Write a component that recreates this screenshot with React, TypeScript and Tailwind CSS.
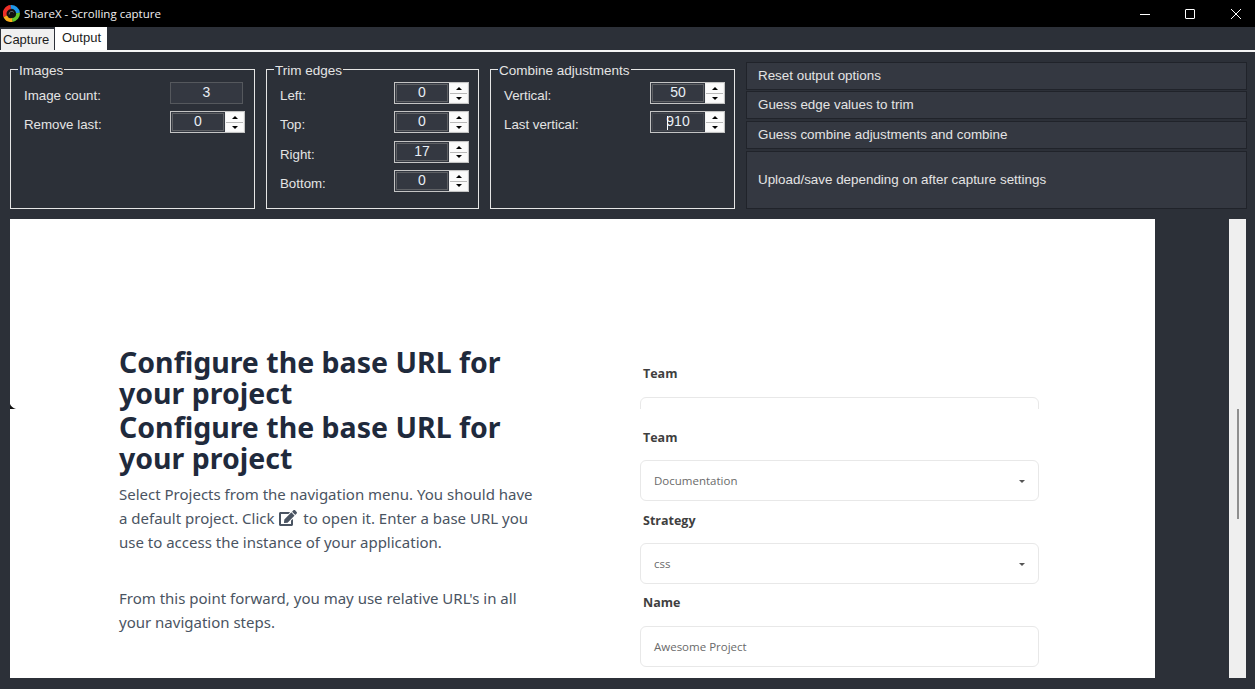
import React from "react";
import { FaEdit } from "react-icons/fa";

const ui = "font-['Liberation_Sans',Arial,sans-serif]";

function Logo() {
  return (
    <svg width="17" height="17" viewBox="0 0 17 17" fill="none" className="shrink-0">
      <circle cx="8.5" cy="8.5" r="8.5" fill="#111" />
      <path d="M2.2 11.2A6.6 6.6 0 0 1 7.8 2" stroke="#ee2f27" strokeWidth="3.8" />
      <path d="M7.8 2A6.6 6.6 0 0 1 15 8" stroke="#1d96e8" strokeWidth="3.8" />
      <path d="M15 8A6.6 6.6 0 0 1 9.2 15" stroke="#62c62a" strokeWidth="3.8" />
      <path d="M9.2 15A6.6 6.6 0 0 1 2.2 11.2" stroke="#f9ae1a" strokeWidth="3.8" />
      <path d="M6.2 9.5A2.6 2.6 0 0 1 10.8 7.4" stroke="#ffffff" strokeOpacity=".35" strokeWidth="1" />
    </svg>
  );
}

function Spin({ value, caret }: { value: string; caret?: boolean }) {
  return (
    <div className="flex w-[75px] h-[22px] border border-[#c4c4c4] bg-[#343841] shrink-0">
      <div className="p-px w-[54px] h-full">
        <div className={`relative w-full h-full border ${caret ? "border-[#44474e]" : "border-[#5f6165]"} flex items-center justify-center text-[#e8eef5] text-[14px] leading-none pb-[2px]`}>
          {caret && <span className="absolute left-[14px] top-[2px] w-px h-[14px] bg-white" />}
          {value}
        </div>
      </div>
      <div className="flex-1 bg-[#f4f4f4] flex flex-col justify-between px-px py-px">
        <div className="h-[9px] bg-[#fbfbfb] flex items-center justify-center">
          <span className="w-0 h-0 border-x-[3.5px] border-x-transparent border-b-[3.5px] border-b-black" />
        </div>
        <div className="h-px bg-[#b8b8b8]" />
        <div className="h-[8px] bg-[#fbfbfb] flex items-center justify-center">
          <span className="w-0 h-0 border-x-[3.5px] border-x-transparent border-t-[3.5px] border-t-black" />
        </div>
      </div>
    </div>
  );
}

function Row({ label, children }: { label: string; children: React.ReactNode }) {
  return (
    <div className="flex items-center justify-between pl-[13px] pr-[9px] h-[22px]">
      <span className="text-[13.3px] leading-none text-[#e4e4e4] pt-[5px]">{label}</span>
      {children}
    </div>
  );
}

function Group({ title, width, children }: { title: string; width: string; children: React.ReactNode }) {
  return (
    <fieldset className={`${width} h-[147px] border border-[#e6e6e6] shrink-0`}>
      <legend className="ml-[7px] px-px text-[13.5px] leading-[15px] text-[#e4e4e4]">
        <span className="relative top-px">{title}</span>
      </legend>
      <div className="mt-[5px] flex flex-col gap-[7.33px]">{children}</div>
    </fieldset>
  );
}

function ActionButton({ label, h, extra = "pt-px" }: { label: string; h: string; extra?: string }) {
  return (
    <div className={`${h} ${extra} flex items-center pl-[11px] bg-[#343841] border border-[#20232a] text-[13.4px] text-[#e4e4e4]`}>
      {label}
    </div>
  );
}

function FieldLabel({ label }: { label: string }) {
  return (
    <div className="pl-[3px] text-[12.5px] leading-[20px] font-bold text-[#3f3f3f]">
      <span className="relative top-px">{label}</span>
    </div>
  );
}

function Field({ label, value, arrow, gap = "mt-[13px]" }: { label: string; value: string; arrow?: boolean; gap?: string }) {
  return (
    <div>
      <FieldLabel label={label} />
      <div className={`${gap} h-[41px] flex items-center justify-between pl-[13px] pr-[13px] pt-[1px] border border-[#e8e8e8] rounded-[6px] text-[11.5px] text-[#6a6a6a]`}>
        {value}
        {arrow && <span className="w-0 h-0 border-x-[3.5px] border-x-transparent border-t-[3.5px] border-t-[#555]" />}
      </div>
    </div>
  );
}

const Heading = () => (
  <h2 className="text-[28.5px] leading-[31px] font-bold text-[#1f2a3c]">Configure the base URL for your project</h2>
);

export default function App() {
  return (
    <div className={`${ui} relative w-[1255px] h-[689px] overflow-hidden flex flex-col bg-[#2c3038]`}>
      <header className="h-[27px] bg-black flex items-center shrink-0">
        <div className="pl-[3px] pr-[4px]"><Logo /></div>
        <span className="font-['Open_Sans',sans-serif] text-[11.5px] text-[#f0f0f0]">ShareX - Scrolling capture</span>
        <div className="ml-auto flex items-center pr-[14px] gap-[35px]">
          <svg width="10" height="10" viewBox="0 0 10 10" className="text-white"><path d="M0 5.5h10" stroke="currentColor" /></svg>
          <svg width="10" height="10" viewBox="0 0 10 10" className="text-white"><rect x=".5" y=".5" width="9" height="9" rx=".5" fill="none" stroke="currentColor" /></svg>
          <svg width="10" height="10" viewBox="0 0 10 10" className="text-white ml-[1px]"><path d="M0 0l10 10M10 0L0 10" stroke="currentColor" /></svg>
        </div>
      </header>

      <nav className="h-[23px] flex items-end gap-px pl-px shrink-0">
        <div className="h-[21px] w-[53px] bg-[#f0f0f0] text-[13px] leading-[22px] text-[#1c1c1c] pl-[2px]">Capture</div>
        <div className="h-[23px] w-[52px] bg-white text-[13px] leading-[22px] text-[#1c1c1c] pl-[7px]">Output</div>
      </nav>
      <div className="h-[2px] bg-[#f4f4f4] shrink-0" />

      <section className="mt-[10px] pl-[10px] pr-[8px] flex gap-[11px] shrink-0">
        <Group title="Images" width="w-[245px]">
          <Row label="Image count:">
            <div className="w-[73px] h-[22px] mr-[2px] bg-[#343841] border border-[#55585d] flex items-center justify-center text-[14px] text-[#e8eef5] pb-[2px]">3</div>
          </Row>
          <Row label="Remove last:"><Spin value="0" /></Row>
        </Group>
        <Group title="Trim edges" width="w-[213px]">
          <Row label="Left:"><Spin value="0" /></Row>
          <Row label="Top:"><Spin value="0" /></Row>
          <Row label="Right:"><Spin value="17" /></Row>
          <Row label="Bottom:"><Spin value="0" /></Row>
        </Group>
        <Group title="Combine adjustments" width="w-[245px]">
          <Row label="Vertical:"><Spin value="50" /></Row>
          <Row label="Last vertical:"><Spin value="910" caret /></Row>
        </Group>
        <div className="flex-1 flex flex-col">
          <ActionButton label="Reset output options" h="h-[28px]" />
          <div className="mt-px"><ActionButton label="Guess edge values to trim" h="h-[28px]" /></div>
          <div className="mt-[2px]"><ActionButton label="Guess combine adjustments and combine" h="h-[28px]" /></div>
          <div className="mt-[2px] flex-1 flex flex-col"><ActionButton label="Upload/save depending on after capture settings" h="flex-1" extra="" /></div>
        </div>
      </section>

      <main className="mt-[10px] h-[459px] pl-[10px] pr-[9px] flex justify-between shrink-0">
        <div className="relative w-[1145px] h-full bg-white flex overflow-hidden">
          <svg width="6" height="5" viewBox="0 0 6 5" className="absolute left-0 top-[185px]"><path d="M0 0C1 2.5 3 4 6 5H0Z" fill="#111" /></svg>
          <div className="ml-[109px] w-[421px] pt-[128px] font-['Noto_Sans',sans-serif]">
            <Heading />
            <div className="mt-[3px]"><Heading /></div>
            <p className="mt-[8px] text-[15px] leading-[24px] text-[#4a5462]">
              Select Projects from the navigation menu. You should have a default project. Click{" "}
              <FaEdit className="inline-block align-[-3px] ml-px mr-[2px] text-[18px] text-[#4a5462]" /> to open it. Enter a base URL you use to access the instance of your application.
            </p>
            <p className="mt-[32px] text-[15px] leading-[24px] text-[#4a5462]">
              From this point forward, you may use relative URL's in all your navigation steps.
            </p>
          </div>
          <div className="ml-[100px] w-[399px] pt-[144px] font-['Open_Sans',sans-serif]">
            <div className="h-[46px] overflow-hidden">
              <FieldLabel label="Team" />
              <div className="mt-[14px] h-[41px] border border-[#e8e8e8] rounded-[6px]" />
            </div>
            <div className="mt-[18px]">
              <Field label="Team" value="Documentation" arrow />
            </div>
            <div className="mt-[9px]"><Field label="Strategy" value="css" arrow /></div>
            <div className="mt-[8px]"><Field label="Name" value="Awesome Project" gap="mt-[14px]" /></div>
          </div>
        </div>
        <div className="w-[17px] h-full bg-[#efefef] flex flex-col items-center pt-[190px]">
          <div className="w-[2px] h-[110px] bg-[#8f8f8f]" />
        </div>
      </main>
    </div>
  );
}
